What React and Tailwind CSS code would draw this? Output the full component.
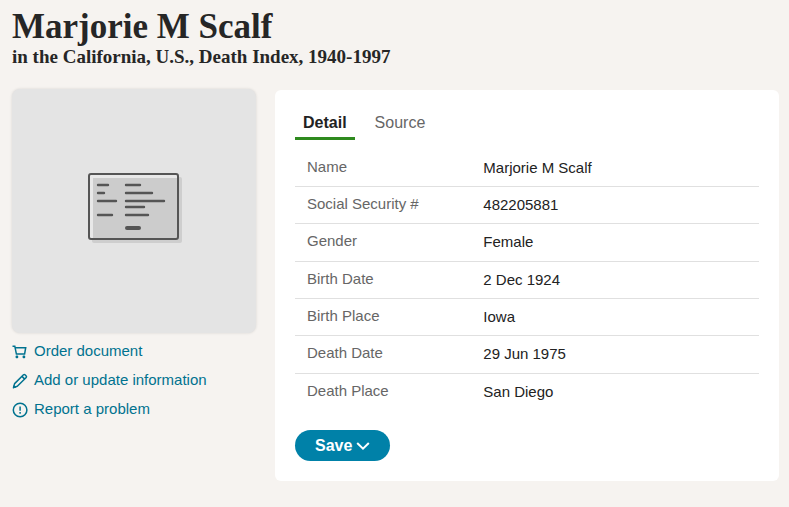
import { useState } from "react";

const details = [
  { label: "Name", value: "Marjorie M Scalf" },
  { label: "Social Security #", value: "482205881" },
  { label: "Gender", value: "Female" },
  { label: "Birth Date", value: "2 Dec 1924" },
  { label: "Birth Place", value: "Iowa" },
  { label: "Death Date", value: "29 Jun 1975" },
  { label: "Death Place", value: "San Diego" },
];

function CartIcon() {
  return (
    <svg className="w-4 h-4 shrink-0" viewBox="0 0 16 16" fill="none" stroke="currentColor" strokeWidth="1.5">
      <path d="M0.5 2.2h2.3l1.6 7.9h8.2l1.1-6.4H3.3" />
      <rect x="3.6" y="11.6" width="2.6" height="2.6" rx="0.8" fill="currentColor" stroke="none" />
      <rect x="10.6" y="11.6" width="2.6" height="2.6" rx="0.8" fill="currentColor" stroke="none" />
    </svg>
  );
}

function PencilIcon() {
  return (
    <svg className="w-4 h-4 shrink-0" viewBox="0 0 16 16" fill="none" stroke="currentColor" strokeWidth="1.5" strokeLinejoin="round">
      <path d="M2.6 10.6l8.9-8.8q.8-.7 1.5 0l1.2 1.2q.7.8 0 1.5l-8.9 8.8-3.8 1.2zM10 3.4l2.7 2.7" />
      <path d="M0.8 15.4l1-3.4 2.5 2.4z" fill="currentColor" stroke="none" />
    </svg>
  );
}

function AlertIcon() {
  return (
    <svg className="w-4 h-4 shrink-0" viewBox="0 0 16 16" fill="none" stroke="currentColor" strokeWidth="1.5">
      <circle cx="8.1" cy="8" r="6.8" />
      <path d="M8.1 4.4v4.4M8.1 10.1v1.7" />
    </svg>
  );
}

function RecordIcon() {
  return (
    <svg width="96" height="72" viewBox="0 0 96 72" fill="none">
      <rect x="5" y="5" width="90" height="66" rx="2" fill="#cecece" />
      <rect x="2" y="2" width="89" height="65" rx="2" fill="#e8e8e8" />
      <path d="M6 6h85v61H6z" fill="#cccccc" />
      <rect x="2" y="2" width="89" height="65" rx="2" stroke="#555" strokeWidth="2" />
      <g stroke="#555" strokeWidth="2.4" strokeLinecap="round">
        <path d="M11 13h10M11 21h6M11 29h18M11 43h14" />
        <path d="M39 13h14M39 21h26M39 29h38M39 35h18M39 43h22" />
        <path d="M40 56h12" strokeWidth="4" />
      </g>
    </svg>
  );
}

const links = [
  { text: "Order document", Icon: CartIcon },
  { text: "Add or update information", Icon: PencilIcon },
  { text: "Report a problem", Icon: AlertIcon },
];

export default function RecordPage() {
  const [tab, setTab] = useState("Detail");

  const tabClass = (name) =>
    name === tab
      ? "h-10 px-2 pt-2 border-b-3 border-[#2f8a1e] font-bold text-[#222]"
      : "h-10 px-2 pt-2 border-b-3 border-transparent text-[#666]";

  return (
    <div className="min-h-screen bg-[#f6f3f0] pl-3 pr-[10px] pt-2 pb-6 font-['Liberation_Sans',Arial,sans-serif] text-[15px] text-[#222]">
      <header className="font-['Liberation_Serif',serif] font-bold text-[#262626]">
        <h1 className="text-[35px] leading-[38px]">Marjorie M Scalf</h1>
        <p className="text-[19px] leading-[22px]">in the California, U.S., Death Index, 1940-1997</p>
      </header>

      <main className="mt-[21px] grid grid-cols-[244px_1fr] items-start gap-[19px]">
        <aside>
          <button
            type="button"
            aria-label="View record"
            className="flex aspect-square w-full items-center justify-center rounded-lg bg-[#e4e4e4] pb-[6px] pl-[2px] shadow-[0_0_3px_rgba(0,0,0,0.12)]"
          >
            <RecordIcon />
          </button>
          <ul className="mt-1">
            {links.map(({ text, Icon }) => (
              <li key={text}>
                <a href="#" className="flex h-[29px] items-center gap-[6px] text-[#00728f] hover:underline">
                  <Icon />
                  {text}
                </a>
              </li>
            ))}
          </ul>
        </aside>

        <section className="rounded-md bg-white px-5 pt-[10px] pb-5 mt-px">
          <div role="tablist" className="flex gap-3 text-base">
            {["Detail", "Source"].map((name) => (
              <button
                key={name}
                type="button"
                role="tab"
                aria-selected={name === tab}
                onClick={() => setTab(name)}
                className={tabClass(name)}
              >
                {name}
              </button>
            ))}
          </div>

          <table className="mt-[10px] h-[260px] w-full table-fixed">
            <tbody>
              {details.map((row) => (
                <tr key={row.label} className="border-b border-[#e0e0e0] last:border-b-0">
                  <th scope="row" className="w-[38%] px-3 pb-[2px] text-left font-normal text-[#666]">
                    {row.label}
                  </th>
                  <td className="px-3">{row.value}</td>
                </tr>
              ))}
            </tbody>
          </table>

          <button
            type="button"
            className="mt-5 flex h-[31px] items-center gap-1 rounded-full bg-[#0081a8] px-5 text-base font-bold text-white"
          >
            Save
            <svg className="w-[14px] h-2" viewBox="0 0 14 8" fill="none" stroke="currentColor" strokeWidth="2">
              <path d="M1.2 1l5.8 5.6L12.8 1" />
            </svg>
          </button>
        </section>
      </main>
    </div>
  );
}
